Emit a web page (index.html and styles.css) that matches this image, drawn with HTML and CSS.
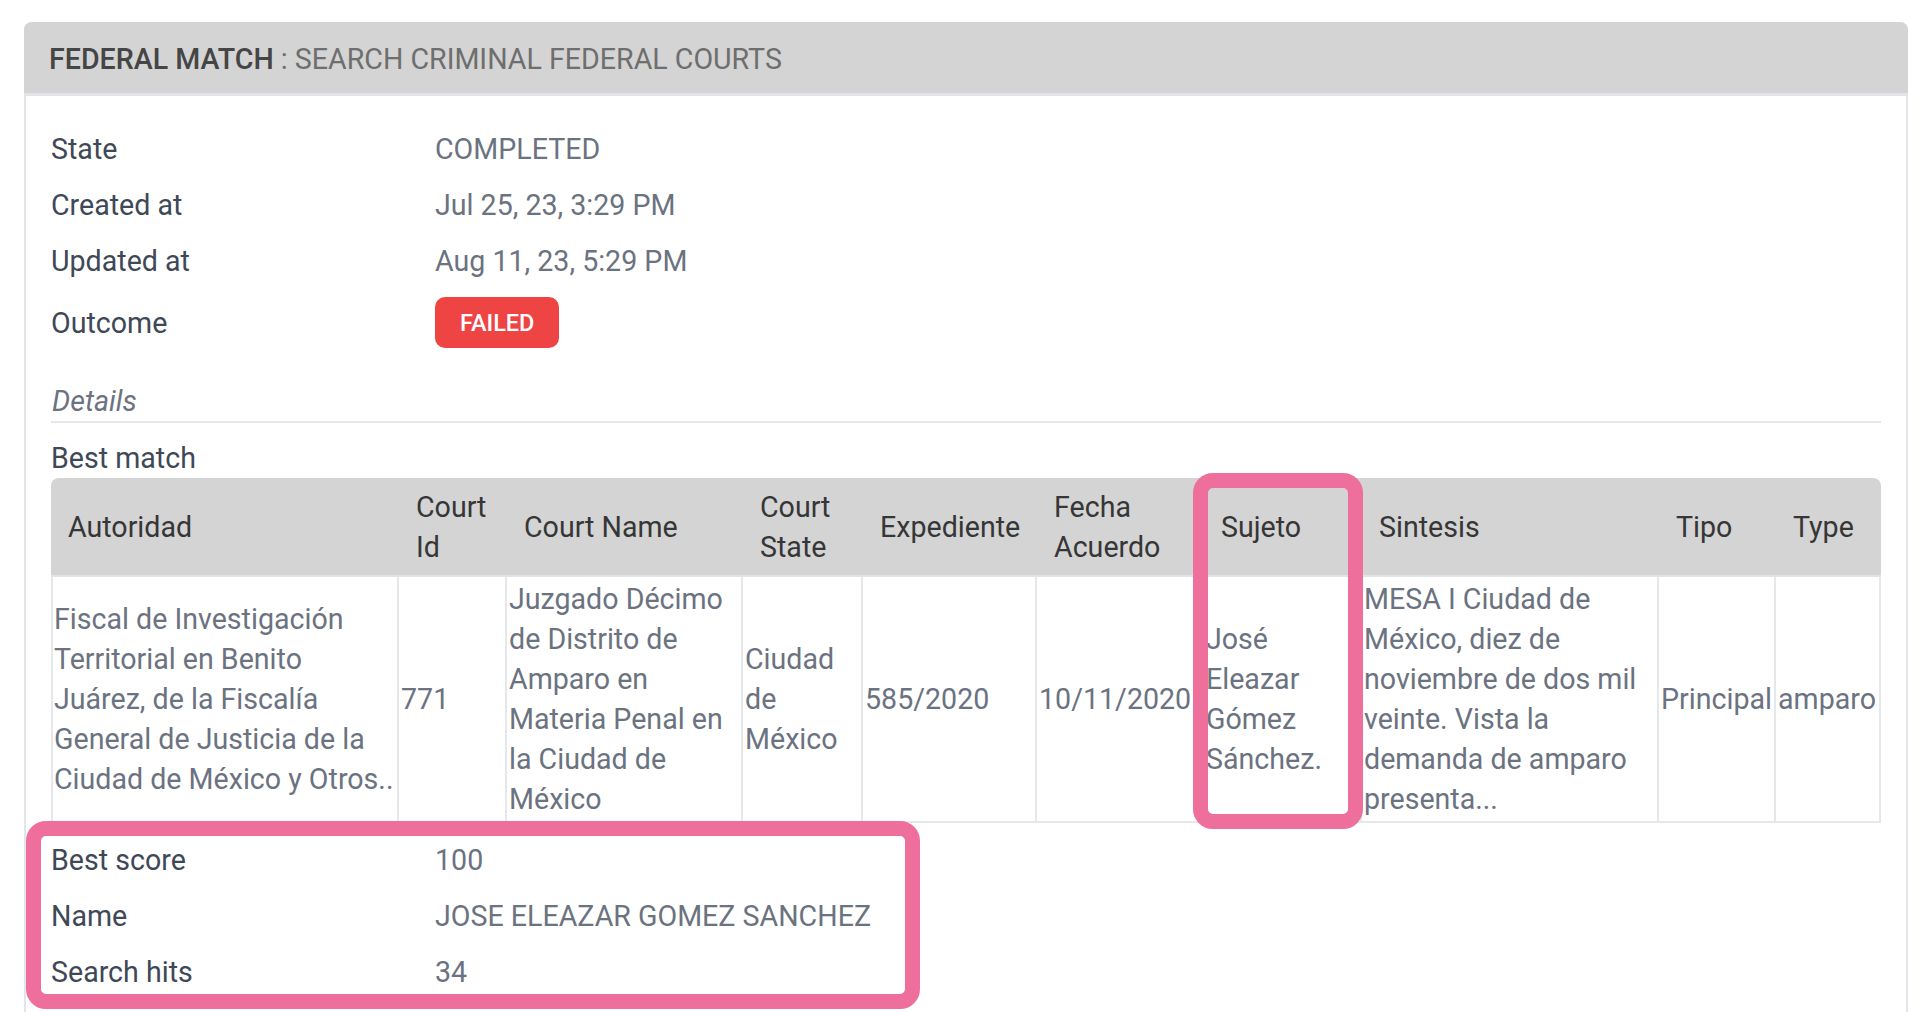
FILE: index.html
```html
<!DOCTYPE html>
<html lang="en">
<head>
<meta charset="utf-8">
<title>Federal Match</title>
<link rel="stylesheet" href="styles.css">
</head>
<body>
<div class="card">
  <div class="card-header">
    <span class="title">FEDERAL MATCH</span><span class="subtitle"> : SEARCH CRIMINAL FEDERAL COURTS</span>
  </div>
  <div class="card-body">
    <div class="fields">
      <div class="field"><div class="label">State</div><div class="value">COMPLETED</div></div>
      <div class="field"><div class="label">Created at</div><div class="value">Jul 25, 23, 3:29 PM</div></div>
      <div class="field"><div class="label">Updated at</div><div class="value">Aug 11, 23, 5:29 PM</div></div>
      <div class="field"><div class="label">Outcome</div><div class="value"><span class="badge">FAILED</span></div></div>
    </div>
    <div class="section-title">Details</div>
    <div class="subsection-title">Best match</div>
    <table class="matches">
      <colgroup>
        <col class="c-autoridad">
        <col class="c-courtid">
        <col class="c-courtname">
        <col class="c-courtstate">
        <col class="c-expediente">
        <col class="c-fecha">
        <col class="c-sujeto">
        <col class="c-sintesis">
        <col class="c-tipo">
        <col class="c-type">
      </colgroup>
      <thead>
        <tr>
          <th>Autoridad</th>
          <th>Court Id</th>
          <th>Court Name</th>
          <th>Court State</th>
          <th>Expediente</th>
          <th>Fecha Acuerdo</th>
          <th>Sujeto</th>
          <th>Sintesis</th>
          <th>Tipo</th>
          <th>Type</th>
        </tr>
      </thead>
      <tbody>
        <tr>
          <td>Fiscal de Investigación Territorial en Benito Juárez, de la Fiscalía General de Justicia de la Ciudad de México y Otros..</td>
          <td>771</td>
          <td>Juzgado Décimo de Distrito de Amparo en Materia Penal en la Ciudad de México</td>
          <td>Ciudad de México</td>
          <td>585/2020</td>
          <td class="nowrap">10/11/2020</td>
          <td>José Eleazar Gómez Sánchez.</td>
          <td>MESA I Ciudad de México, diez de noviembre de dos mil veinte. Vista la demanda de amparo presenta...</td>
          <td>Principal</td>
          <td>amparo</td>
        </tr>
      </tbody>
    </table>
    <div class="fields fields-after">
      <div class="field"><div class="label">Best score</div><div class="value">100</div></div>
      <div class="field"><div class="label">Name</div><div class="value">JOSE ELEAZAR GOMEZ SANCHEZ</div></div>
      <div class="field"><div class="label">Search hits</div><div class="value">34</div></div>
    </div>
  </div>
</div>
<div class="highlight highlight-sujeto"></div>
<div class="highlight highlight-summary"></div>
</body>
</html>
```

FILE: styles.css
```css
html, body {
  margin: 0;
  padding: 0;
  background: #ffffff;
}

body {
  font-family: Roboto, "Liberation Sans", Arial, sans-serif;
  font-size: 28.6px;
  line-height: 40px;
  color: #6b7280;
}

.card {
  margin: 22px 0 0 24px;
  width: 1884px;
  box-sizing: border-box;
  border-left: 2px solid #e4e5eb;
  border-right: 2px solid #e4e5eb;
  border-radius: 8px 8px 0 0;
  min-height: 1000px;
}

.card-header {
  background: #d4d4d4;
  margin: 0 -2px;
  padding: 17px 25px 14px 25px;
  border-radius: 8px 8px 0 0;
  border-bottom: 3px solid #e3e3ea;
  white-space: nowrap;
}

.title {
  color: #454545;
  font-weight: 500;
}

.subtitle {
  color: #6e6e6e;
}

.card-body {
  padding: 25px 25px 0 25px;
}

.fields {
  display: flex;
  flex-direction: column;
}

.field {
  display: grid;
  grid-template-columns: 384px 1fr;
  align-items: center;
  padding: 8px 0;
}

.label {
  color: #3e4857;
}

.value {
  color: #6b7280;
}

.badge {
  display: inline-flex;
  align-items: center;
  height: 51px;
  padding: 0 25px;
  box-sizing: border-box;
  border-radius: 10px;
  background: #ef4444;
  color: #ffffff;
  font-size: 23.5px;
  font-weight: 500;
  vertical-align: middle;
}

.section-title {
  margin-top: 25px;
  font-style: italic;
  color: #6b7280;
  border-bottom: 2px solid #e5e7eb;
  padding-left: 1px;
}

.subsection-title {
  padding-top: 15px;
  color: #3e4857;
}

.matches {
  width: 1830px;
  table-layout: fixed;
  border-collapse: separate;
  border-spacing: 0;
}

.c-autoridad { width: 348px; }
.c-courtid { width: 108px; }
.c-courtname { width: 236px; }
.c-courtstate { width: 120px; }
.c-expediente { width: 174px; }
.c-fecha { width: 167px; }
.c-sujeto { width: 158px; }
.c-sintesis { width: 297px; }
.c-tipo { width: 117px; }
.c-type { width: 105px; }

.matches th {
  background: #d4d4d4;
  color: #363636;
  font-weight: 400;
  text-align: left;
  vertical-align: middle;
  padding: 9px 8px 8px 17px;
  border-bottom: 2px solid #e3e4ea;
}

.matches th:first-child {
  border-top-left-radius: 8px;
}

.matches th:last-child {
  border-top-right-radius: 8px;
}

.matches td {
  color: #6b7280;
  vertical-align: middle;
  padding: 2px 1px 2px 2px;
  border-right: 2px solid #e5e7eb;
  border-bottom: 2px solid #e5e7eb;
  overflow: visible;
}

.matches td:first-child {
  border-left: 2px solid #e5e7eb;
  padding-left: 1px;
  padding-right: 0;
}

.nowrap {
  white-space: nowrap;
}

.fields-after {
  padding-top: 9px;
}

.highlight {
  position: absolute;
  box-sizing: border-box;
  border: 15px solid #ee6f9b;
  border-radius: 20px;
  pointer-events: none;
}

.highlight-sujeto {
  left: 1193px;
  top: 473px;
  width: 170px;
  height: 356px;
}

.highlight-summary {
  left: 26px;
  top: 821px;
  width: 894px;
  height: 188px;
}
```
